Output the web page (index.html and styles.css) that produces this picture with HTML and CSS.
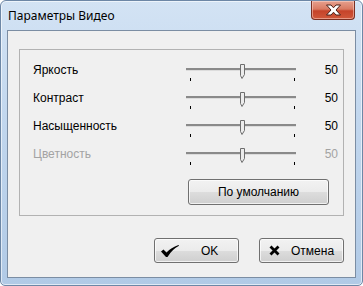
FILE: index.html
```html
<!DOCTYPE html>
<html lang="ru">
<head>
    <meta charset="UTF-8">
    <title>Параметры Видео</title>
    <link rel="stylesheet" href="styles.css">
</head>
<body>
    <div class="window">
        <div class="titlebar">
            <span class="title">Параметры Видео</span>
            <div class="close">
                <svg width="17" height="12" viewBox="0 0 17 12">
                    <path d="M1.5,1 H6 L8.5,3.8 L11,1 H15.5 L11,6 L15.5,11 H11 L8.5,8.2 L6,11 H1.5 L6,6 Z" fill="#fff" stroke="#4a2019" stroke-width="1" stroke-linejoin="round"/>
                </svg>
            </div>
        </div>
        <div class="client">
            <div class="group">
                <div class="row">
                    <span class="label">Яркость</span>
                    <svg class="slider" width="112" height="28" viewBox="0 0 112 28">
                        <rect x="1" y="12" width="110" height="2" fill="#8a8a8a"/>
                        <rect x="1" y="14" width="110" height="1" fill="#dcdcdc"/>
                        <rect x="5" y="22" width="1" height="3" fill="#000"/>
                        <rect x="109" y="22" width="1" height="3" fill="#000"/>
                        <path d="M55.5,8.5 H59.5 V18.5 L57,22.5 L55.5,19.5 Z" fill="#ececec" stroke="#6e6e6e"/>
                    </svg>
                    <span class="value">50</span>
                </div>
                <div class="row">
                    <span class="label">Контраст</span>
                    <svg class="slider" width="112" height="28" viewBox="0 0 112 28">
                        <rect x="1" y="12" width="110" height="2" fill="#8a8a8a"/>
                        <rect x="1" y="14" width="110" height="1" fill="#dcdcdc"/>
                        <rect x="5" y="22" width="1" height="3" fill="#000"/>
                        <rect x="109" y="22" width="1" height="3" fill="#000"/>
                        <path d="M55.5,8.5 H59.5 V18.5 L57,22.5 L55.5,19.5 Z" fill="#ececec" stroke="#6e6e6e"/>
                    </svg>
                    <span class="value">50</span>
                </div>
                <div class="row">
                    <span class="label">Насыщенность</span>
                    <svg class="slider" width="112" height="28" viewBox="0 0 112 28">
                        <rect x="1" y="12" width="110" height="2" fill="#8a8a8a"/>
                        <rect x="1" y="14" width="110" height="1" fill="#dcdcdc"/>
                        <rect x="5" y="22" width="1" height="3" fill="#000"/>
                        <rect x="109" y="22" width="1" height="3" fill="#000"/>
                        <path d="M55.5,8.5 H59.5 V18.5 L57,22.5 L55.5,19.5 Z" fill="#ececec" stroke="#6e6e6e"/>
                    </svg>
                    <span class="value">50</span>
                </div>
                <div class="row disabled">
                    <span class="label">Цветность</span>
                    <svg class="slider" width="112" height="28" viewBox="0 0 112 28">
                        <rect x="1" y="12" width="110" height="2" fill="#8a8a8a"/>
                        <rect x="1" y="14" width="110" height="1" fill="#dcdcdc"/>
                        <rect x="5" y="22" width="1" height="3" fill="#000"/>
                        <rect x="109" y="22" width="1" height="3" fill="#000"/>
                        <path d="M55.5,8.5 H59.5 V18.5 L57,22.5 L55.5,19.5 Z" fill="#ececec" stroke="#6e6e6e"/>
                    </svg>
                    <span class="value">50</span>
                </div>
                <div class="defaults">
                    <button class="btn btn-wide">По умолчанию</button>
                </div>
            </div>
            <div class="actions">
                <button class="btn btn-ok">
                    <svg width="18" height="12" viewBox="0 0 18 12">
                        <path d="M0,6.5 L2.5,4.5 L5.5,7.5 Q10,2.5 17.5,0 L18,0.8 Q11,4.5 6.5,12 H5 Z" fill="#000"/>
                    </svg>
                    <span>OK</span>
                </button>
                <button class="btn btn-cancel">
                    <svg width="11" height="11" viewBox="0 0 11 11">
                        <path d="M1.5,1.5 L9.5,9.5 M9.5,1.5 L1.5,9.5" stroke="#000" stroke-width="2.8" stroke-linecap="butt"/>
                    </svg>
                    <span>Отмена</span>
                </button>
            </div>
        </div>
    </div>
</body>
</html>
```

FILE: styles.css
```css
body {
    margin: 0;
    padding: 0;
    font-family: "Liberation Sans", Arial, sans-serif;
    font-size: 12px;
    background: #ffffff;
}
.window {
    width: 363px;
    height: 286px;
    box-sizing: border-box;
    border: 1px solid #6d87a6;
    border-radius: 6px 6px 5px 5px;
    background: linear-gradient(180deg, #d3e3f4 0%, #c2d7ee 40%, #b1cae6 100%);
    box-shadow: inset 0 0 0 1px rgba(255, 255, 255, 0.6);
    padding: 0 6px 7px 6px;
    display: flex;
    flex-direction: column;
}
.titlebar {
    height: 29px;
    display: flex;
    align-items: flex-start;
    justify-content: space-between;
}
.title {
    font-family: "Noto Sans", "Open Sans", sans-serif;
    font-size: 12px;
    color: #000;
    margin-top: 6px;
    margin-left: 1px;
}
.close {
    width: 44px;
    height: 19px;
    margin-right: 1px;
    box-sizing: border-box;
    border: 1px solid #7b2f22;
    border-top: none;
    border-radius: 0 0 4px 4px;
    background: linear-gradient(180deg, #e6a08e 0%, #d97a62 45%, #c5432a 55%, #d0583b 100%);
    box-shadow: inset 0 0 0 1px rgba(255, 220, 210, 0.5);
    display: flex;
    align-items: center;
    justify-content: center;
}
.client {
    flex: 1;
    border: 1px solid #7b8da3;
    background: #f0f0f0;
    padding: 18px 11px 0 11px;
}
.group {
    border: 1px solid #b2b2b2;
    padding: 6px 0 10px 0;
}
.row {
    display: grid;
    grid-template-columns: 152px 112px 1fr;
    align-items: center;
    height: 28px;
    padding-left: 13px;
    color: #000;
}
.slider {
    display: block;
}
.value {
    text-align: right;
    padding-right: 5px;
}
.disabled {
    color: #a3a3a3;
}
.defaults {
    margin-top: 11px;
    padding-left: 168px;
}
.btn {
    font-family: "Liberation Sans", Arial, sans-serif;
    font-size: 12px;
    color: #000;
    height: 25px;
    box-sizing: border-box;
    border: 1px solid #707070;
    border-radius: 3px;
    background: linear-gradient(180deg, #f2f2f2 0%, #ebebeb 50%, #dddddd 50%, #cfcfcf 100%);
    box-shadow: inset 0 0 0 1px rgba(255, 255, 255, 0.7);
    padding: 0;
}
.btn-wide {
    width: 141px;
    height: 26px;
}
.actions {
    display: flex;
    justify-content: flex-end;
    gap: 20px;
    margin-top: 22px;
}
.btn-ok, .btn-cancel {
    width: 85px;
    display: flex;
    align-items: center;
}
.btn-ok svg {
    margin-left: 6px;
}
.btn-ok span {
    margin-left: 22px;
}
.btn-cancel svg {
    margin-left: 9px;
}
.btn-cancel span {
    margin-left: 11px;
}
```
